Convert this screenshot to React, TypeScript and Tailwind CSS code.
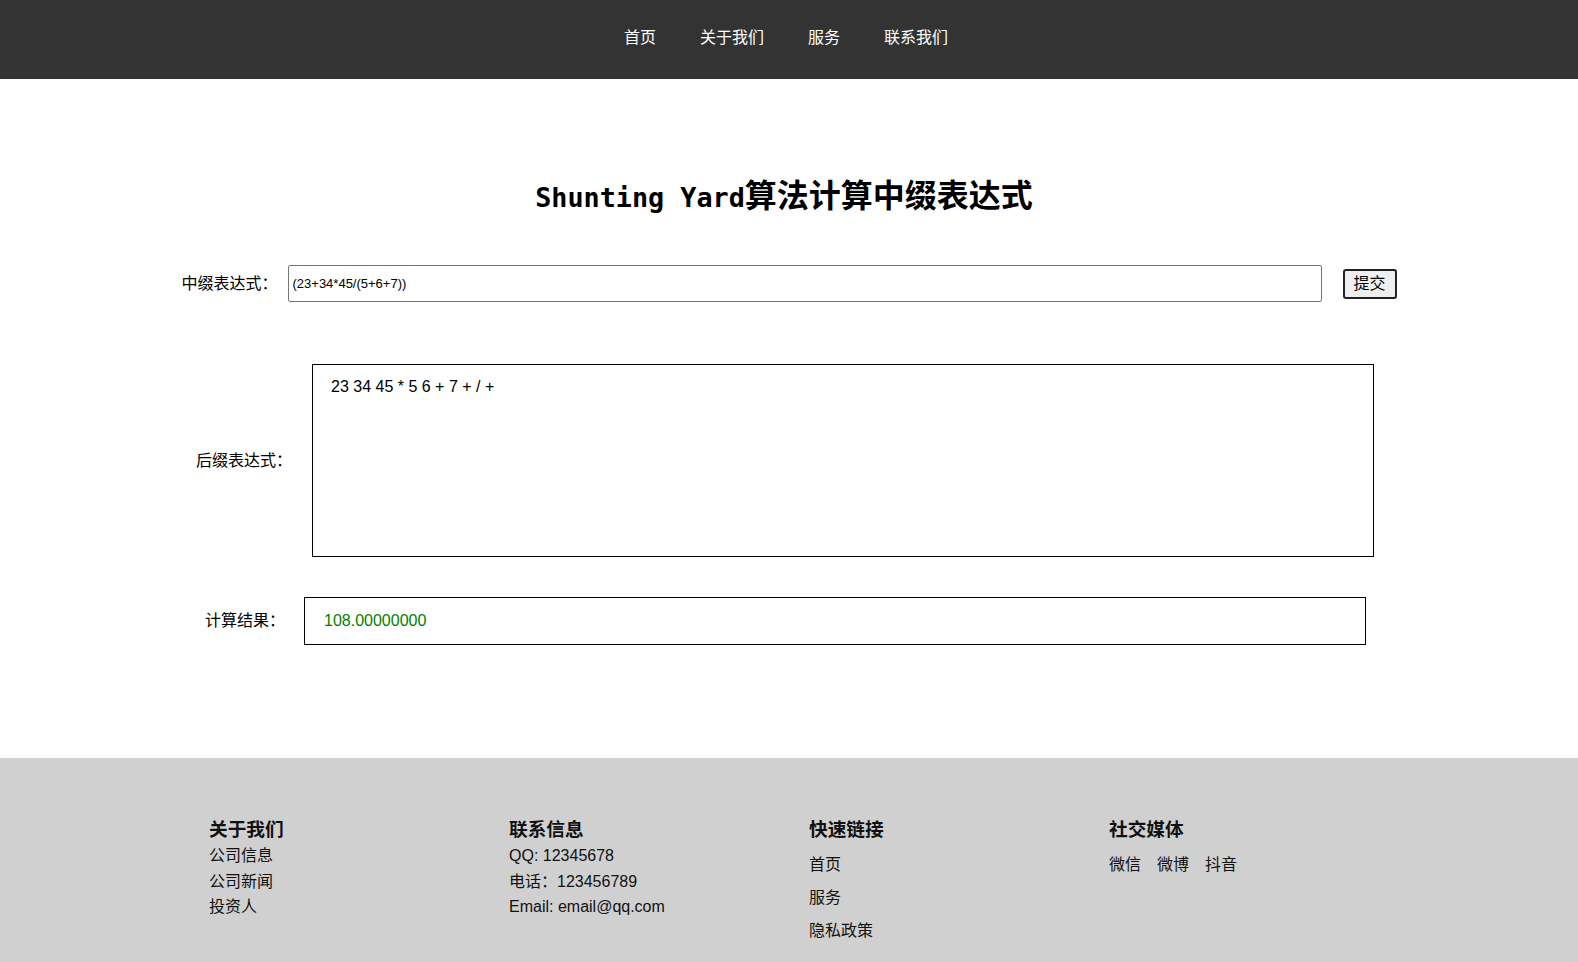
import React from 'react';

const cjk = "font-['Liberation_Sans','Noto_Sans_CJK_SC',sans-serif]";

const App: React.FC = () => {
  return (
    <div className={`min-h-screen flex flex-col bg-white text-black ${cjk}`}>
      {/* Top nav */}
      <nav className="h-[79px] bg-[#333333] flex items-center justify-center pr-[6px] pb-[4px]">
        <ul className="flex items-center text-white text-[16px] leading-[20px]">
          <li className="px-[22px]">首页</li>
          <li className="px-[22px]">关于我们</li>
          <li className="px-[22px]">服务</li>
          <li className="px-[22px]">联系我们</li>
        </ul>
      </nav>

      {/* Main */}
      <main className="flex-1 flex flex-col items-center pt-[96px] pb-[113px]">
        <h1 className="text-[32px] leading-[36px] font-bold font-['Noto_Sans_CJK_SC',sans-serif] pr-[10px]">
          <span className="font-['DejaVu_Sans_Mono',monospace] text-[26.8px]">Shunting Yard</span>
          算法计算中缀表达式
        </h1>

        <div className="mt-[49px] flex items-center justify-center">
          <label className="text-[16px] mr-[10px]">中缀表达式：</label>
          <input
            className="w-[1034px] h-[37px] border border-[#767676] rounded-[2px] px-[4px] text-[13px] text-black outline-none"
            defaultValue="(23+34*45/(5+6+7))"
          />
          <button className="ml-[21px] w-[54px] h-[30px] border-2 border-[#222222] rounded-[3px] bg-[#efefef] text-[16px] leading-[20px]">
            提交
          </button>
        </div>

        <div className="mt-[62px] flex items-center justify-center pr-[8px]">
          <label className="text-[16px] mr-[20px]">后缀表达式：</label>
          <div className="w-[1062px] h-[193px] border border-black px-[18px] pt-[12px] text-[16px] leading-[20px]">
            23 34 45 * 5 6 + 7 + / +
          </div>
        </div>

        <div className="mt-[40px] flex items-center justify-center pr-[7px]">
          <label className="text-[16px] mr-[19px]">计算结果：</label>
          <div className="w-[1062px] h-[48px] border border-black px-[19px] flex items-center text-[16px] text-[#008000]">
            108.00000000
          </div>
        </div>
      </main>

      {/* Footer */}
      <footer className="bg-[#d0d0d0] h-[208px] pt-[59px] flex justify-center text-[16px] text-[#111111]">
        <div className="w-[300px] pl-[20px]">
          <h3 className="text-[18.7px] leading-[26px] font-bold">关于我们</h3>
          <ul className="leading-[25.5px]">
            <li>公司信息</li>
            <li>公司新闻</li>
            <li>投资人</li>
          </ul>
        </div>
        <div className="w-[300px] pl-[20px]">
          <h3 className="text-[18.7px] leading-[26px] font-bold">联系信息</h3>
          <ul className="leading-[25.5px]">
            <li>QQ: 12345678</li>
            <li>电话：123456789</li>
            <li>Email: email@qq.com</li>
          </ul>
        </div>
        <div className="w-[300px] pl-[20px]">
          <h3 className="text-[18.7px] leading-[26px] font-bold">快速链接</h3>
          <ul className="mt-[9px] flex flex-col gap-[7px] leading-[26px]">
            <li>首页</li>
            <li>服务</li>
            <li>隐私政策</li>
          </ul>
        </div>
        <div className="w-[300px] pl-[20px]">
          <h3 className="text-[18.7px] leading-[26px] font-bold">社交媒体</h3>
          <ul className="mt-[9px] flex gap-[16px] leading-[26px]">
            <li>微信</li>
            <li>微博</li>
            <li>抖音</li>
          </ul>
        </div>
      </footer>
    </div>
  );
};

export default App;
